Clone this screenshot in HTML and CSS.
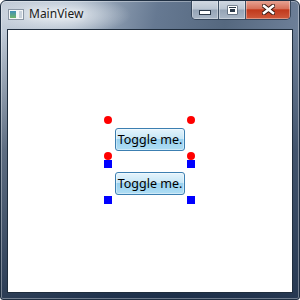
FILE: index.html
```html
<!DOCTYPE html>
<html lang="en">
<head>
    <meta charset="UTF-8">
    <title>MainView</title>
    <link rel="stylesheet" href="styles.css">
</head>
<body>
    <div class="window">
        <div class="titlebar">
            <svg class="app-icon" width="16" height="16" viewBox="0 0 16 16">
                <defs>
                    <linearGradient id="ico" x1="0" y1="0" x2="0" y2="1">
                        <stop offset="0" stop-color="#3f8fb8"/>
                        <stop offset="1" stop-color="#6fb56a"/>
                    </linearGradient>
                </defs>
                <rect x="0.5" y="2.5" width="15" height="10" fill="#f4f6f8" stroke="#8a96a4"/>
                <rect x="2" y="4" width="6" height="7" fill="url(#ico)"/>
                <rect x="11" y="4" width="3" height="7" fill="#c9d2dc"/>
            </svg>
            <span class="title">MainView</span>
            <div class="caption-buttons">
                <div class="cap-btn cap-min">
                    <svg width="12" height="5" viewBox="0 0 12 5"><rect x="0.5" y="0.5" width="11" height="4" fill="#fff" stroke="#2c3a4a"/></svg>
                </div>
                <div class="cap-btn cap-max">
                    <svg width="11" height="10" viewBox="0 0 11 10"><rect x="0.5" y="0.5" width="10" height="9" fill="#2c3a4a"/><rect x="1.5" y="1.5" width="8" height="7" fill="none" stroke="#fff" stroke-width="1"/><rect x="2.5" y="3.5" width="6" height="4" fill="none" stroke="#fff" stroke-width="1"/></svg>
                </div>
                <div class="cap-btn cap-close">
                    <svg width="13" height="11" viewBox="0 0 13 11"><path d="M2 2 L11 9 M11 2 L2 9" stroke="#3a1a12" stroke-width="4.5" stroke-linecap="square"/><path d="M2 2 L11 9 M11 2 L2 9" stroke="#fff" stroke-width="2.5" stroke-linecap="square"/></svg>
                </div>
            </div>
        </div>

        <div class="client">
            <div class="stack">
                <div class="adorned">
                    <span class="marker dot tl"></span>
                    <span class="marker dot tr"></span>
                    <span class="marker dot bl"></span>
                    <span class="marker dot br"></span>
                    <button class="toggle">Toggle me.</button>
                </div>
                <div class="adorned">
                    <span class="marker square tl"></span>
                    <span class="marker square tr"></span>
                    <span class="marker square bl"></span>
                    <span class="marker square br"></span>
                    <button class="toggle">Toggle me.</button>
                </div>
            </div>
        </div>
    </div>
</body>
</html>
```

FILE: styles.css
```css
body {
    margin: 0;
    padding: 0;
    width: 300px;
    height: 300px;
    font-family: "Noto Sans", "Liberation Sans", sans-serif;
}

.window {
    box-sizing: border-box;
    width: 300px;
    height: 300px;
    display: flex;
    flex-direction: column;
    border: 1px solid #1f2f42;
    border-radius: 6px 6px 3px 3px;
    background:
        linear-gradient(180deg, rgba(255, 255, 255, 0) 0%, rgba(255, 255, 255, 0) 10%, rgba(20, 38, 64, 0.55) 50%, rgba(20, 38, 64, 0.85) 100%),
        radial-gradient(ellipse 70px 20px at 60px 14px, rgba(240, 244, 248, 0.9), rgba(240, 244, 248, 0) 100%),
        linear-gradient(100deg, #c3cdd9 0%, #a9b7c7 22%, #667992 45%, #55687f 65%, #6c7e97 85%, #8d9db1 100%);
    box-shadow: inset 0 0 0 1px rgba(255, 255, 255, 0.35);
    overflow: hidden;
}

/* Title bar */
.titlebar {
    height: 28px;
    display: flex;
    align-items: flex-start;
    padding-left: 7px;
    padding-right: 8px;
}

.app-icon {
    margin-top: 6px;
    flex: none;
}

.title {
    margin-left: 5px;
    margin-top: 5px;
    font-family: "Noto Sans", sans-serif;
    font-size: 12px;
    line-height: 16px;
    color: #1b1b1b;
    text-shadow: 0 0 6px rgba(255, 255, 255, 0.9);
}

.caption-buttons {
    margin-left: auto;
    margin-top: -1px;
    display: flex;
    height: 20px;
    border: 1px solid #36475c;
    border-top: none;
    border-radius: 0 0 5px 5px;
    overflow: hidden;
    box-sizing: border-box;
}

.cap-btn {
    display: flex;
    align-items: center;
    justify-content: center;
    box-shadow: inset 0 0 0 1px rgba(255, 255, 255, 0.35);
}

.cap-min {
    width: 26px;
    border-right: 1px solid #3e4f63;
    background: linear-gradient(180deg, #d4dbe4 0%, #bac5d2 48%, #95a4b6 52%, #a9b6c6 100%);
}

.cap-min svg {
    margin-top: 6px;
}

.cap-max {
    width: 26px;
    border-right: 1px solid #3e4f63;
    background: linear-gradient(180deg, #d4dbe4 0%, #bac5d2 48%, #95a4b6 52%, #a9b6c6 100%);
}

.cap-close {
    width: 44px;
    background: linear-gradient(180deg, #e8a899 0%, #d7725b 45%, #c2391c 52%, #cf5a3c 100%);
}

/* Client area */
.client {
    flex: 1;
    margin: 0 6px 6px 6px;
    border: 1px solid #1f2d3d;
    background: #ffffff;
    display: flex;
    align-items: center;
    justify-content: center;
    padding: 0 1px 2px 0;
}

.stack {
    display: flex;
    flex-direction: column;
    gap: 8px;
}

.adorned {
    position: relative;
    box-sizing: border-box;
    width: 83px;
    height: 36px;
    padding: 8px 6px 5px 7px;
}

.toggle {
    display: block;
    box-sizing: border-box;
    width: 70px;
    height: 23px;
    padding: 0;
    border: 1px solid #3c7fb1;
    border-radius: 3px;
    background: linear-gradient(180deg, #e5f4fc 0%, #c4e5f6 50%, #98d1ef 50%, #b0def4 100%);
    box-shadow: inset 0 0 0 1px rgba(255, 255, 255, 0.4);
    font-family: "Noto Sans", sans-serif;
    font-size: 12.5px;
    line-height: 20px;
    color: #000000;
}

/* Adorner markers */
.marker {
    position: absolute;
    width: 8px;
    height: 8px;
}

.dot {
    background: #ff0000;
    border-radius: 50%;
}

.square {
    background: #0000ff;
}

.tl { left: -4px; top: -4px; }
.tr { right: -4px; top: -4px; }
.bl { left: -4px; bottom: -4px; }
.br { right: -4px; bottom: -4px; }
```
